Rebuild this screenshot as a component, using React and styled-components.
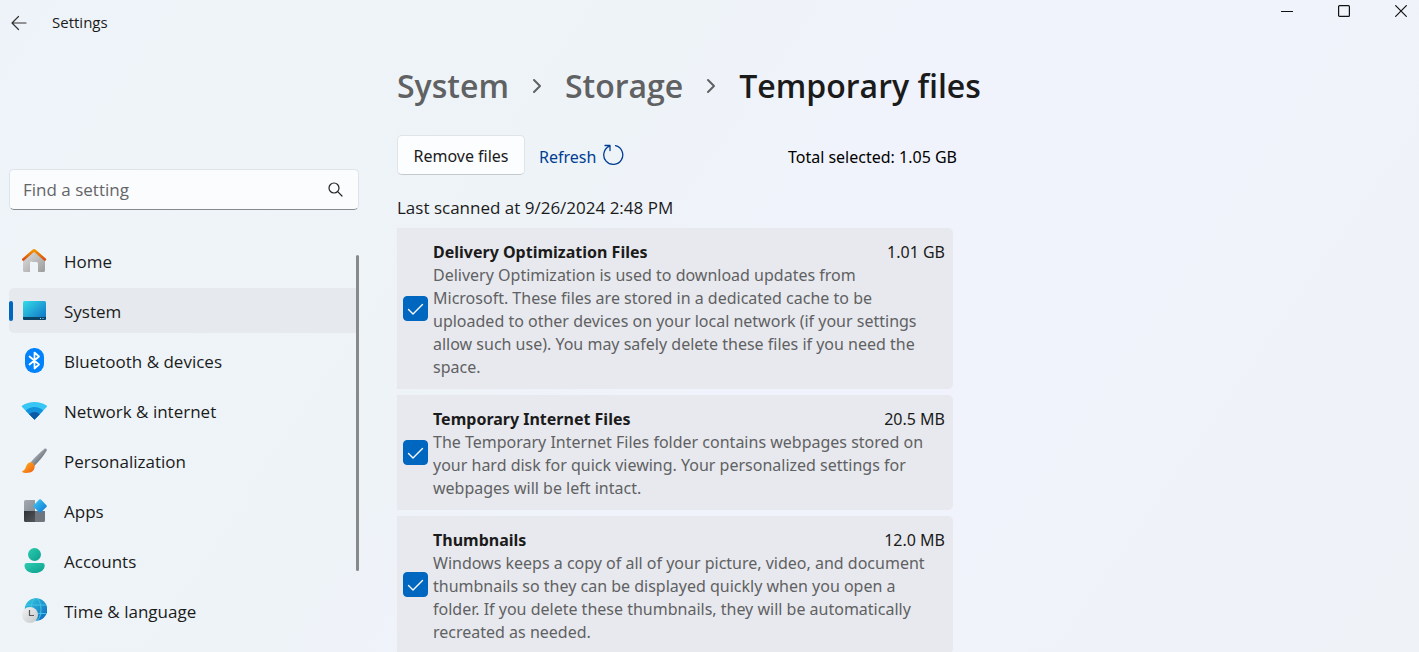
import React from 'react';
import styled, { createGlobalStyle } from 'styled-components';

const displayFont = '"Open Sans", "Noto Sans", sans-serif';

const GlobalStyle = createGlobalStyle`
  * { box-sizing: border-box; }
  body {
    margin: 0;
    font-family: "Noto Sans", "Open Sans", sans-serif;
    font-size: 16px;
    color: #1b1b1b;
  }
  button, input { font: inherit; color: inherit; }
`;

const Window = styled.div`
  display: flex;
  flex-direction: column;
  height: 100vh;
  overflow: hidden;
  background: linear-gradient(125deg, #eef3f9 0%, #eef4f8 12%, #eef3f8 38%, #f0f3fb 52%, #f0f3fb 68%, #eff3f9 82%, #eff3f8 100%);
`;

const TitleBar = styled.header`
  display: flex;
  justify-content: space-between;
  align-items: flex-start;
  height: 46px;
  flex: none;
`;

const TitleGroup = styled.div`
  display: flex;
  align-items: center;
  height: 45px;
  padding-left: 10px;
  gap: 24px;
  font-family: ${displayFont};
  font-size: 15px;
`;

const AppName = styled.span`
  padding-bottom: 2px;
`;

const BareButton = styled.button`
  display: inline-flex;
  align-items: center;
  justify-content: center;
  padding: 0;
  border: 0;
  background: none;
`;

const Caption = styled(BareButton)`
  width: 57px;
  height: 22px;
`;

const CaptionGroup = styled.div`
  display: flex;
  margin-right: -10px;
`;

const Body = styled.div`
  display: flex;
  flex: 1;
  min-height: 0;
`;

const Sidebar = styled.aside`
  display: flex;
  flex-direction: column;
  width: 359px;
  flex: none;
  padding: 123px 0 0 9px;
  font-family: ${displayFont};
  font-size: 17px;
`;

const SearchBox = styled.label`
  display: flex;
  align-items: center;
  flex: none;
  height: 41px;
  padding: 0 15px 0 13px;
  border: 1px solid #e0e3e7;
  border-bottom-color: #85888c;
  border-radius: 5px;
  background: #fbfcfe;
`;

const SearchInput = styled.input`
  flex: 1;
  min-width: 0;
  padding: 0;
  border: 0;
  outline: 0;
  background: none;
  &::placeholder { color: #646567; opacity: 1; }
`;

const Nav = styled.nav`
  position: relative;
  display: flex;
  flex-direction: column;
  gap: 5px;
  padding: 28px 2px 0 0;
`;

const NavLink = styled.a`
  position: relative;
  display: flex;
  align-items: center;
  flex: none;
  gap: 17px;
  height: 45px;
  padding-left: 12px;
  border-radius: 5px 0 0 5px;
  color: inherit;
  text-decoration: none;
  background: ${(p) => (p.$current ? '#e6e9ee' : 'transparent')};
`;

const NavLabel = styled.span`
  padding-top: 2px;
`;

const Pill = styled.span`
  position: absolute;
  left: 0;
  top: 13px;
  width: 4px;
  height: 20px;
  border-radius: 2px;
  background: #0067c0;
`;

const ScrollThumb = styled.div`
  position: absolute;
  right: 0;
  top: 45px;
  width: 3px;
  height: 316px;
  border-radius: 2px;
  background: #88898b;
`;

const Main = styled.main`
  flex: 1;
  min-width: 0;
  padding: 12px 24px 0 38px;
`;

const Crumbs = styled.ol`
  display: flex;
  align-items: center;
  gap: 23px;
  margin: 0;
  padding: 0;
  list-style: none;
  height: 56px;
  font-family: ${displayFont};
  font-size: 32px;
  font-weight: 600;
  line-height: 56px;
  white-space: nowrap;
`;

const Crumb = styled.li`
  display: flex;
  align-items: center;
  gap: 23px;
`;

const CrumbLink = styled.a`
  color: #5f6163;
  text-decoration: none;
`;

const PageTitle = styled.h1`
  margin: 0;
  font: inherit;
`;

const Actions = styled.div`
  display: flex;
  align-items: center;
  max-width: 560px;
  margin-top: 21px;
`;

const RemoveButton = styled.button`
  width: 128px;
  height: 40px;
  padding: 2px 0 0;
  border: 1px solid #e0e3e7;
  border-bottom-color: #c6c9cc;
  border-radius: 5px;
  background: #fcfdfe;
`;

const RefreshButton = styled(BareButton)`
  gap: 6px;
  margin-left: 14px;
  color: #003e92;
`;

const ActionText = styled.span`
  padding-top: 4px;
`;

const Total = styled.output`
  margin-left: auto;
  padding-top: 4px;
  color: #000;
`;

const Scanned = styled.p`
  margin: 21px 0 8px;
  font-family: ${displayFont};
  font-size: 17px;
  line-height: 24px;
`;

const FileList = styled.ul`
  display: flex;
  flex-direction: column;
  gap: 6px;
  max-width: 556px;
  margin: 0;
  padding: 0;
  list-style: none;
`;

const FileCard = styled.li`
  display: flex;
  align-items: center;
  gap: 5px;
  padding: 12px 8px 10px 6px;
  border-radius: 0 5px 5px 0;
  background: #e8e9ee;
`;

const CheckWrap = styled.span`
  display: grid;
  flex: none;
  margin-bottom: 3px;
  > * { grid-area: 1 / 1; }
  > svg { pointer-events: none; }
`;

const CheckInput = styled.input`
  appearance: none;
  width: 25px;
  height: 25px;
  margin: 0;
  border: 1px solid #85888c;
  border-radius: 4px;
  &:checked { background: #0067c0; border-color: #0067c0; }
  &:not(:checked) + svg { visibility: hidden; }
`;

const FileText = styled.div`
  flex: 1;
  min-width: 0;
`;

const FileHead = styled.div`
  display: flex;
  justify-content: space-between;
  line-height: 24px;
`;

const FileName = styled.label`
  font-weight: 700;
`;

const FileInfo = styled.p`
  margin: 0;
  padding-right: 14px;
  line-height: 23px;
  color: #606163;
`;

const NavIcon = ({ children }) => (
  <svg width="26" height="26" viewBox="0 0 26 26" fill="none" aria-hidden="true">{children}</svg>
);

const HomeIcon = () => (
  <NavIcon>
    <defs>
      <linearGradient id="homeWall" x1="0" y1="0" x2="1" y2="1"><stop stopColor="#e2e2e2" /><stop offset="1" stopColor="#9c9c9c" /></linearGradient>
      <linearGradient id="homeRoof" x1="0" y1="0" x2="0" y2="1"><stop stopColor="#f59300" /><stop offset="1" stopColor="#d94f0d" /></linearGradient>
    </defs>
    <path d="M2 11 13 2l11 9v11.500a1.500 1.500 0 0 1-1.500 1.500H17v-8.500a1.500 1.500 0 0 0-1.500-1.500h-4A1.500 1.500 0 0 0 9 15.500V24H3.500A1.500 1.500 0 0 1 2 22.500Z" fill="url(#homeWall)" />
    <path d="M2.300 11.500 12.300 2.700a1.200 1.200 0 0 1 1.600 0l10 8.800" stroke="url(#homeRoof)" strokeWidth="2.600" strokeLinecap="round" />
  </NavIcon>
);

const SystemIcon = () => (
  <NavIcon>
    <defs><linearGradient id="screen" x1="0" y1="0" x2="1" y2="1"><stop stopColor="#35dbe8" /><stop offset="1" stopColor="#0d6fc4" /></linearGradient></defs>
    <rect x="2" y="3" width="23" height="19" rx="1.500" fill="url(#screen)" />
    <path d="M2 19h23v1.500a1.500 1.500 0 0 1-1.500 1.500h-20A1.500 1.500 0 0 1 2 20.500Z" fill="#0b4467" />
    <path d="M19 20.500h1M21.500 20.500h1" stroke="#9fe3f7" />
  </NavIcon>
);

const BluetoothIcon = () => (
  <NavIcon>
    <rect x="4" y="0" width="19" height="25" rx="9" fill="#0082fc" />
    <path d="M8.500 8.500 18 16.500l-4.500 4v-16l4.500 4-9.500 8" stroke="#fff" strokeWidth="1.700" strokeLinejoin="round" strokeLinecap="round" />
  </NavIcon>
);

const NetworkIcon = () => (
  <NavIcon>
    <clipPath id="fan"><path d="M13.500 21.700.8 8.800Q.6 8 1.300 7.600 6.500 4 13.500 4t12.100 3.600q.7.500.3 1.200Z" /></clipPath>
    <g clipPath="url(#fan)">
      <path d="M0 0h26v26H0Z" fill="#38c6f4" />
      <circle cx="13.500" cy="21.500" r="12.500" fill="#1592dc" />
      <circle cx="13.500" cy="21.500" r="7.500" fill="#0c59a4" />
    </g>
  </NavIcon>
);

const PersonalizationIcon = () => (
  <NavIcon>
    <defs>
      <linearGradient id="handle" x1="0" y1="0" x2="1" y2="1"><stop offset=".3" stopColor="#a8afb6" /><stop offset=".7" stopColor="#666c73" /></linearGradient>
      <linearGradient id="bristle" x1="0" y1="0" x2="1" y2="1"><stop stopColor="#ffb626" /><stop offset="1" stopColor="#ee5d10" /></linearGradient>
    </defs>
    <path d="M9.500 14.500C14 9 19 4 23.300.9c1.600-1 3.200.5 2.200 2.200C22.500 8 18 13.500 12.800 18.500Z" fill="url(#handle)" />
    <path d="M5.600 17.200c1.600-3.500 5.300-4 7.200-1.300 2.500 3.700-.6 8.600-5.600 8.900-2.400.2-4.600 0-5.700-.6-.8-.5-.4-1.100.3-1.300 2.300-.8 2.700-3.200 3.800-5.700Z" fill="url(#bristle)" />
  </NavIcon>
);

const AppsIcon = () => (
  <NavIcon>
    <defs>
      <linearGradient id="tile" x1="0" y1="0" x2="1" y2="1"><stop stopColor="#a3a9b0" /><stop offset="1" stopColor="#888e95" /></linearGradient>
      <linearGradient id="tileDark" x1="0" y1="0" x2="1" y2="1"><stop stopColor="#303236" /><stop offset="1" stopColor="#52565b" /></linearGradient>
      <linearGradient id="gem" x1="0" y1="0" x2="1" y2="1"><stop stopColor="#40cdf5" /><stop offset="1" stopColor="#0b73d4" /></linearGradient>
    </defs>
    <path d="M4.500 2H14v11H3V3.500A1.500 1.500 0 0 1 4.500 2Z" fill="url(#tile)" />
    <path d="M3 13h11v11H4.500A1.500 1.500 0 0 1 3 22.500Z" fill="url(#tileDark)" />
    <path d="M14 13h10v9.500a1.500 1.500 0 0 1-1.500 1.500H14Z" fill="#70767d" />
    <path d="m18.200 1.600-5.500 5.600a1.200 1.200 0 0 0 0 1.700l5.500 5.600a1.200 1.200 0 0 0 1.700 0l5.500-5.600a1.200 1.200 0 0 0 0-1.700l-5.500-5.600a1.200 1.200 0 0 0-1.700 0Z" fill="url(#gem)" />
  </NavIcon>
);

const AccountsIcon = () => (
  <NavIcon>
    <defs><linearGradient id="person" x1="0" y1="0" x2="1" y2="1"><stop stopColor="#2bcdb0" /><stop offset="1" stopColor="#0d9e8d" /></linearGradient></defs>
    <circle cx="13.500" cy="6.500" r="6.500" fill="url(#person)" />
    <path d="M5.500 15h16a2.200 2.200 0 0 1 2.200 2.200C23.700 22 19.500 25 13.500 25S3.500 22 3.500 17.200A2.200 2.200 0 0 1 5.500 15Z" fill="url(#person)" />
  </NavIcon>
);

const TimeIcon = () => (
  <NavIcon>
    <defs>
      <linearGradient id="globe" x1="0" y1="0" x2="1" y2="1"><stop stopColor="#35cfe0" /><stop offset="1" stopColor="#0c62bd" /></linearGradient>
      <linearGradient id="clock" x1="0" y1="0" x2="1" y2="1"><stop stopColor="#f4f4f4" /><stop offset="1" stopColor="#c4c6c8" /></linearGradient>
    </defs>
    <circle cx="15" cy="11.500" r="11.300" fill="url(#globe)" />
    <ellipse cx="15" cy="11.500" rx="5" ry="11.300" stroke="#45c3e4" />
    <path d="M5 7h20.300M4 15.500h22" stroke="#45c3e4" />
    <circle cx="9" cy="17" r="8" fill="url(#clock)" />
    <path d="M8.500 12v5.500h4.500" stroke="#55585b" strokeWidth="1.200" />
  </NavIcon>
);

const Chevron = () => (
  <svg width="10" height="16" viewBox="0 0 10 16" fill="none" stroke="#5f6163" strokeWidth="2" strokeLinecap="round" strokeLinejoin="round" aria-hidden="true">
    <path d="m2 2 6 6-6 6" />
  </svg>
);

const navItems = [
  ['Home', HomeIcon],
  ['System', SystemIcon],
  ['Bluetooth & devices', BluetoothIcon],
  ['Network & internet', NetworkIcon],
  ['Personalization', PersonalizationIcon],
  ['Apps', AppsIcon],
  ['Accounts', AccountsIcon],
  ['Time & language', TimeIcon],
];

const files = [
  {
    id: 'delivery',
    name: 'Delivery Optimization Files',
    size: '1.01 GB',
    info: 'Delivery Optimization is used to download updates from Microsoft. These files are stored in a dedicated cache to be uploaded to other devices on your local network (if your settings allow such use). You may safely delete these files if you need the space.',
  },
  {
    id: 'internet',
    name: 'Temporary Internet Files',
    size: '20.5 MB',
    info: 'The Temporary Internet Files folder contains webpages stored on your hard disk for quick viewing. Your personalized settings for webpages will be left intact.',
  },
  {
    id: 'thumbnails',
    name: 'Thumbnails',
    size: '12.0 MB',
    info: 'Windows keeps a copy of all of your picture, video, and document thumbnails so they can be displayed quickly when you open a folder. If you delete these thumbnails, they will be automatically recreated as needed.',
  },
];

export default function App() {
  return (
    <Window>
      <GlobalStyle />
      <TitleBar>
        <TitleGroup>
          <BareButton aria-label="Back">
            <svg width="18" height="16" viewBox="0 0 18 16" fill="none" stroke="#333" strokeWidth="1.200" strokeLinecap="round" strokeLinejoin="round">
              <path d="M16 8H2M8.500 1.500 2 8l6.500 6.500" />
            </svg>
          </BareButton>
          <AppName>Settings</AppName>
        </TitleGroup>
        <CaptionGroup>
          <Caption aria-label="Minimize">
            <svg width="12" height="12" viewBox="0 0 12 12" stroke="#111"><path d="M0 6.500h12" /></svg>
          </Caption>
          <Caption aria-label="Maximize">
            <svg width="12" height="12" viewBox="0 0 12 12" fill="none" stroke="#111" strokeWidth="1.200"><rect x=".6" y=".6" width="10.800" height="10.800" rx="1" /></svg>
          </Caption>
          <Caption aria-label="Close">
            <svg width="12" height="12" viewBox="0 0 12 12" fill="none" stroke="#111" strokeWidth="1.200"><path d="m.3.300 11.400 11.400M11.700.3.300 11.700" /></svg>
          </Caption>
        </CaptionGroup>
      </TitleBar>
      <Body>
        <Sidebar>
          <SearchBox>
            <SearchInput type="text" placeholder="Find a setting" aria-label="Find a setting" />
            <svg width="15" height="15" viewBox="0 0 15 15" fill="none" stroke="#222" strokeWidth="1.200" strokeLinecap="round" aria-hidden="true">
              <circle cx="6" cy="6" r="5" /><path d="m9.700 9.700 4.300 4.300" />
            </svg>
          </SearchBox>
          <Nav>
            {navItems.map(([label, Icon]) => (
              <NavLink key={label} href="#" $current={label === 'System'}>
                {label === 'System' && <Pill />}
                <Icon />
                <NavLabel>{label}</NavLabel>
              </NavLink>
            ))}
            <ScrollThumb />
          </Nav>
        </Sidebar>
        <Main>
          <Crumbs>
            <Crumb><CrumbLink href="#">System</CrumbLink><Chevron /></Crumb>
            <Crumb><CrumbLink href="#">Storage</CrumbLink><Chevron /></Crumb>
            <Crumb><PageTitle>Temporary files</PageTitle></Crumb>
          </Crumbs>
          <Actions>
            <RemoveButton>Remove files</RemoveButton>
            <RefreshButton>
              <ActionText>Refresh</ActionText>
              <svg width="22" height="22" viewBox="0 0 22 22" fill="none" stroke="currentColor" strokeWidth="1.300" strokeLinecap="round" strokeLinejoin="round" aria-hidden="true">
                <path d="M13.500 1.700A9.500 9.500 0 1 1 7.500 2.200M3 1.500h5v5" />
              </svg>
            </RefreshButton>
            <Total>Total selected: 1.05 GB</Total>
          </Actions>
          <Scanned>Last scanned at 9/26/2024 2:48 PM</Scanned>
          <FileList>
            {files.map((file) => (
              <FileCard key={file.id}>
                <CheckWrap>
                  <CheckInput type="checkbox" id={file.id} defaultChecked />
                  <svg width="25" height="25" viewBox="0 0 25 25" fill="none" stroke="#fff" strokeWidth="1.400" strokeLinecap="round" strokeLinejoin="round" aria-hidden="true">
                    <path d="m5.500 13.500 4.500 4.500 9.500-9.500" />
                  </svg>
                </CheckWrap>
                <FileText>
                  <FileHead>
                    <FileName htmlFor={file.id}>{file.name}</FileName>
                    <span>{file.size}</span>
                  </FileHead>
                  <FileInfo>{file.info}</FileInfo>
                </FileText>
              </FileCard>
            ))}
          </FileList>
        </Main>
      </Body>
    </Window>
  );
}
